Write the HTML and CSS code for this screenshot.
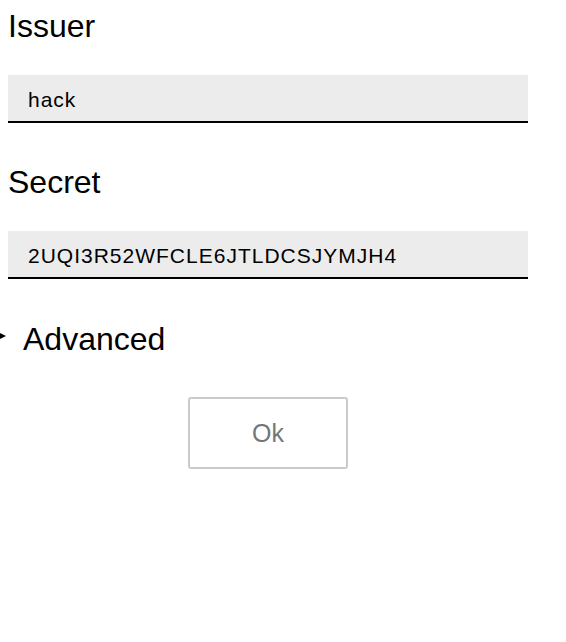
FILE: index.html
```html
<!DOCTYPE html>
<html lang="en">
<head>
<meta charset="utf-8">
<title>Account</title>
<link rel="stylesheet" href="styles.css">
</head>
<body>
<form class="form">
  <label class="label" for="issuer">Issuer</label>
  <input class="field" id="issuer" type="text" value="hack">
  <label class="label label-next" for="secret">Secret</label>
  <input class="field" id="secret" type="text" value="2UQI3R52WFCLE6JTLDCSJYMJH4">
  <div class="advanced" role="button" aria-expanded="false">
    <span class="marker" aria-hidden="true"></span>
    <span>Advanced</span>
  </div>
  <div class="actions">
    <button class="btn" type="button">Ok</button>
  </div>
</form>
</body>
</html>
```

FILE: styles.css
```css
html, body {
  background: #fff;
}
body {
  margin: 8px 8px 8px 0;
  font-family: "Liberation Sans", Arial, sans-serif;
  color: #000;
}
.form {
  width: 520px;
  padding-left: 8px;
  display: flex;
  flex-direction: column;
}
.label {
  display: block;
  font-size: 32px;
  line-height: 37px;
  margin: 0 0 30px;
}
.label-next {
  margin-top: 41px;
}
.field {
  box-sizing: border-box;
  width: 520px;
  height: 48px;
  margin: 0;
  padding: 3px 20px 0;
  border: none;
  border-bottom: 2px solid #000;
  border-radius: 0;
  background: #ececec;
  font-family: "Liberation Sans", Arial, sans-serif;
  font-size: 21px;
  letter-spacing: 1px;
  color: #000;
  outline: none;
}
.advanced {
  display: flex;
  align-items: center;
  margin-top: 42px;
  margin-left: -8px;
  font-size: 32px;
  line-height: 37px;
  cursor: pointer;
}
.marker {
  display: block;
  width: 0;
  height: 0;
  border-top: 3.5px solid transparent;
  border-bottom: 3.5px solid transparent;
  border-left: 6px solid #000;
  margin-right: 17px;
  margin-top: -7px;
  flex: none;
}
.actions {
  display: flex;
  justify-content: center;
  margin-top: 39px;
}
.btn {
  box-sizing: border-box;
  width: 160px;
  height: 72px;
  border: 2px solid #cacaca;
  border-radius: 3px;
  background: #fff;
  font-family: "Liberation Sans", Arial, sans-serif;
  font-size: 25px;
  color: #767676;
  padding: 0;
  margin: 0;
}
```
